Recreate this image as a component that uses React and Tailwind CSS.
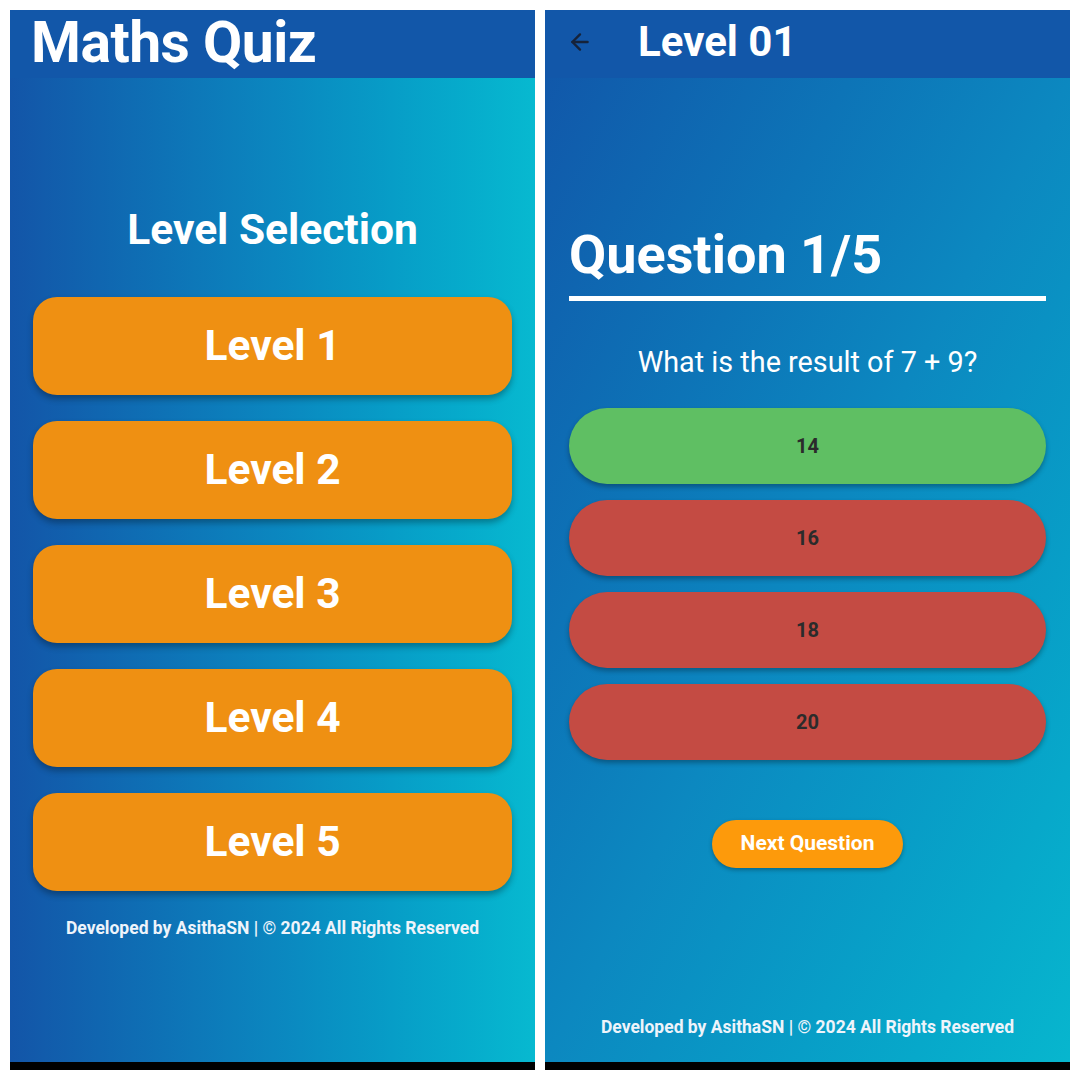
import React from "react";
import { ArrowLeft } from "lucide-react";

const font = { fontFamily: "Roboto, 'Noto Sans', sans-serif" };

function Footer({ className }) {
  return (
    <p className={"text-center text-[17.5px] font-bold text-[#eef4fb] leading-6 " + className}>
      Developed by AsithaSN | © 2024 All Rights Reserved
    </p>
  );
}

function LeftScreen() {
  const levels = [1, 2, 3, 4, 5];
  return (
    <div className="flex flex-col w-[525px] h-[1060px]">
      <div className="h-[68px] bg-[#1257a9] flex items-center pl-[21px] pb-[4px]">
        <h1 className="text-[57px] font-bold text-white leading-none tracking-[-0.5px]">Maths Quiz</h1>
      </div>
      <div className="flex-1 flex flex-col bg-gradient-to-r from-[#1355a8] via-[#0b86bf] to-[#07b9d0]">
        <h2 className="mt-[129px] text-center text-[42.5px] font-bold text-white leading-[46px]">Level Selection</h2>
        <div className="mt-[44px] flex flex-col gap-[26px] px-[23px]">
          {levels.map((l) => (
            <button
              key={l}
              className="h-[98px] rounded-[24px] bg-[#ef9012] text-white text-[42.5px] font-bold shadow-[0_4px_6px_rgba(0,0,0,0.3)]"
            >
              Level {l}
            </button>
          ))}
        </div>
        <Footer className="mt-[25px]" />
      </div>
      <div className="h-[8px] bg-black" />
    </div>
  );
}

function RightScreen() {
  const answers = [
    { v: "14", c: "bg-[#5fbf63]" },
    { v: "16", c: "bg-[#c44b43]" },
    { v: "18", c: "bg-[#c44b43]" },
    { v: "20", c: "bg-[#c44b43]" },
  ];
  return (
    <div className="flex flex-col w-[525px] h-[1060px]">
      <div className="h-[68px] bg-[#1257a9] flex items-center pb-[4px]">
        <ArrowLeft className="ml-[22px] text-[#16233a]" size={26} strokeWidth={2.2} />
        <h1 className="ml-[45px] text-[42px] font-bold text-white leading-none">Level 01</h1>
      </div>
      <div className="flex-1 flex flex-col bg-gradient-to-br from-[#1158aa] via-[#0c88c0] to-[#07b6ce] px-[24px]">
        <h2 className="mt-[147px] text-[54px] font-bold text-white leading-[60px]">Question 1/5</h2>
        <div className="mt-[11px] h-[5px] bg-white" />
        <p className="mt-[44px] text-center text-[28.8px] text-white leading-[34px]">What is the result of 7 + 9?</p>
        <div className="mt-[29px] flex flex-col gap-[16px]">
          {answers.map((a) => (
            <button
              key={a.v}
              className={"h-[76px] rounded-full text-[20px] font-bold text-[#2b2b2b] shadow-[0_3px_5px_rgba(0,0,0,0.3)] " + a.c}
            >
              {a.v}
            </button>
          ))}
        </div>
        <div className="mt-[60px] flex justify-center">
          <button className="h-[48px] w-[191px] rounded-full bg-[#fd9a0b] text-white text-[21px] font-bold shadow-[0_2px_4px_rgba(0,0,0,0.3)]">
            Next Question
          </button>
        </div>
        <div className="flex-1" />
        <Footer className="mb-[23px]" />
      </div>
      <div className="h-[8px] bg-black" />
    </div>
  );
}

export default function App() {
  return (
    <div className="w-[1080px] h-[1080px] bg-white flex gap-[10px] p-[10px]" style={font}>
      <LeftScreen />
      <RightScreen />
    </div>
  );
}
